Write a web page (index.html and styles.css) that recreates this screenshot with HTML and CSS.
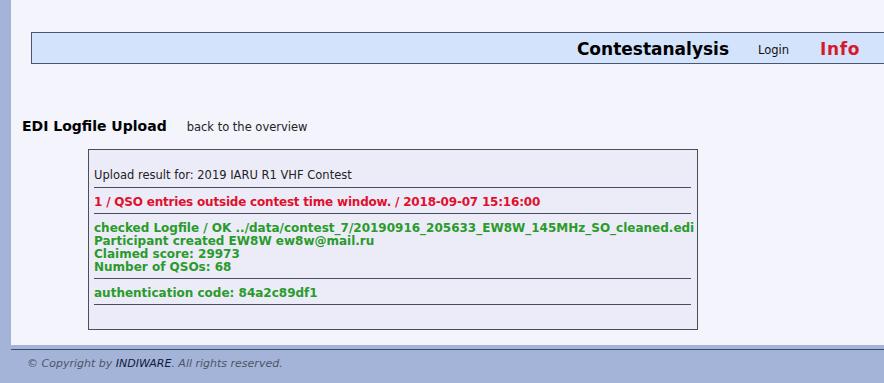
FILE: index.html
```html
<!DOCTYPE html>
<html>
<head>
<meta charset="utf-8">
<link rel="stylesheet" href="styles.css">
</head>
<body>
<div class="page">
  <div class="content">
    <div class="topbar">
      <span class="brand">Contestanalysis</span>
      <span class="login">Login</span>
      <span class="info">Info</span>
    </div>
    <div class="titlerow">
      <h1 class="title">EDI Logfile Upload</h1>
      <span class="back">back to the overview</span>
    </div>
    <div class="result">
      <div class="sec first">Upload result for: 2019 IARU R1 VHF Contest</div>
      <div class="sec red">1 / QSO entries outside contest time window. / 2018-09-07 15:16:00</div>
      <div class="sec green">checked Logfile / OK ../data/contest_7/20190916_205633_EW8W_145MHz_SO_cleaned.edi<br>Participant created EW8W ew8w@mail.ru<br>Claimed score: 29973<br>Number of QSOs: 68</div>
      <div class="sec green">authentication code: 84a2c89df1</div>
    </div>
  </div>
  <div class="footer">
    <span>© Copyright by <span class="brandname">INDIWARE</span>. All rights reserved.</span>
  </div>
</div>
</body>
</html>
```

FILE: styles.css
```css
html, body {
  margin: 0;
  padding: 0;
  background: #a3b4d8;
  font-family: "DejaVu Sans", Verdana, sans-serif;
  font-size: 11.5px;
  color: #222;
  overflow: hidden;
}
.page {
  padding-left: 11px;
  height: 383px;
}
.content {
  background: #f3f4fc;
  height: 345px;
  padding-top: 32px;
  box-sizing: border-box;
  overflow: hidden;
}
.topbar {
  margin-left: 20px;
  margin-right: -4px;
  height: 30px;
  border: 1px solid #4a5670;
  background: #d3e3fb;
  display: flex;
  align-items: center;
  justify-content: flex-end;
  padding-right: 27px;
}
.brand {
  font-weight: bold;
  font-size: 17px;
  color: #000;
  margin-top: 2px;
}
.login {
  font-size: 11.5px;
  color: #111;
  margin-left: 29px;
  margin-top: 4px;
}
.info {
  font-weight: bold;
  font-size: 17px;
  letter-spacing: 0.6px;
  color: #d51a2e;
  margin-left: 31px;
  margin-top: 2px;
}
.titlerow {
  display: flex;
  align-items: baseline;
  margin: 54px 0 0 11px;
  height: 31px;
}
.title {
  font-size: 14px;
  font-weight: bold;
  color: #000;
  margin: 0;
}
.back {
  margin-left: 20px;
  color: #222;
}
.result {
  box-sizing: border-box;
  margin: 0 0 0 77px;
  width: 610px;
  height: 181px;
  border: 1px solid #4a4d5e;
  background: #ececf9;
  padding: 12px 6px 0 5px;
}
.sec {
  line-height: 13px;
  padding: 8px 0 4px;
  border-bottom: 1px solid #4a4d5e;
  white-space: nowrap;
}
.sec.first {
  padding-top: 7px;
  padding-bottom: 5px;
}
.red {
  color: #e0102c;
  font-weight: bold;
  font-size: 12px;
  letter-spacing: -0.2px;
}
.green {
  color: #2a9b2a;
  font-weight: bold;
  font-size: 12px;
}
.footer {
  border-top: 1px solid #3e4a6a;
  margin-top: 4px;
  padding: 7px 0 0 16px;
  font-style: italic;
  font-size: 11px;
  color: #4e5566;
}
.brandname {
  color: #101840;
}
```
